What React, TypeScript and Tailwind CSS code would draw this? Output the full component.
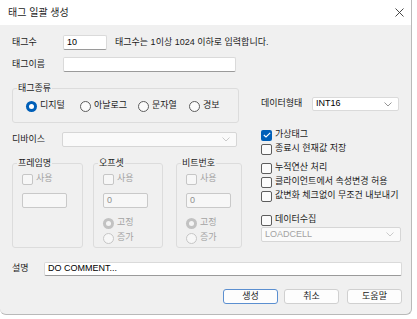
import React from 'react';

const font = "font-['Liberation_Sans','Noto_Sans_CJK_KR',sans-serif]";

function Chevron({ light }: { light?: boolean }) {
  return (
    <svg width="8" height="5" viewBox="0 0 8 5" className="shrink-0">
      <polyline points="0.5,0.5 4,4 7.5,0.5" fill="none" stroke={light ? '#c4c4c4' : '#8a8a8a'} strokeWidth="0.9" />
    </svg>
  );
}

function Check({ label, checked, disabled }: { label: string; checked?: boolean; disabled?: boolean }) {
  return (
    <div className="flex h-[14px] items-center gap-[3px]">
      {checked ? (
        <span className="flex h-[11px] w-[11px] items-center justify-center rounded-[2px] bg-[#005fb8]">
          <svg width="8" height="6" viewBox="0 0 8 6">
            <polyline points="0.8,3 3,5 7.2,0.8" fill="none" stroke="#fff" strokeWidth="1.1" />
          </svg>
        </span>
      ) : (
        <span
          className={
            disabled
              ? 'h-[11px] w-[11px] rounded-[2px] border border-[#c6c6c6] bg-[#f7f7f7]'
              : 'h-[11px] w-[11px] rounded-[2px] border border-[#5d5d5d] bg-[#fbfbfb]'
          }
        />
      )}
      <span className={disabled ? 'text-[#a3a3a3]' : 'text-[#1b1b1b]'}>{label}</span>
    </div>
  );
}

function Radio({ label, checked, disabled, w }: { label: string; checked?: boolean; disabled?: boolean; w?: string }) {
  let dot;
  if (checked && !disabled) {
    dot = (
      <span className="flex h-[11px] w-[11px] items-center justify-center rounded-full bg-[#005fb8]">
        <span className="h-[5px] w-[5px] rounded-full bg-white" />
      </span>
    );
  } else if (checked) {
    dot = (
      <span className="flex h-[11px] w-[11px] items-center justify-center rounded-full bg-[#c2c2c2]">
        <span className="h-[5px] w-[5px] rounded-full bg-[#f4f4f4]" />
      </span>
    );
  } else {
    dot = (
      <span
        className={
          disabled
            ? 'h-[11px] w-[11px] rounded-full border border-[#c6c6c6] bg-[#f7f7f7]'
            : 'h-[11px] w-[11px] rounded-full border border-[#5d5d5d] bg-[#fbfbfb]'
        }
      />
    );
  }
  return (
    <div className={`flex h-[12px] items-center gap-[3px] ${w ?? ''}`}>
      {dot}
      <span className={disabled ? 'text-[#a3a3a3]' : 'text-[#1b1b1b]'}>{label}</span>
    </div>
  );
}

function SubGroup({ title, w, value, radios }: { title: string; w: string; value?: string; radios?: boolean }) {
  return (
    <fieldset className={`box-border h-[91px] rounded-[3px] border border-[#dcdcdc] pl-[9px] ${w}`}>
      <legend className="-ml-[5px] px-[1px] leading-[12px] text-[#1b1b1b]">{title}</legend>
      <div className="pt-[3px]">
        <Check label="사용" disabled />
      </div>
      <div className="mt-[7px] flex h-[15px] w-[45px] items-center rounded-[2px] border border-[#c9c9c9] bg-[#f7f7f7] pl-[3px] text-[#8f8f8f]">
        {value}
      </div>
      {radios && (
        <div className="mt-[9px] flex flex-col gap-[3px]">
          <Radio label="고정" checked disabled />
          <Radio label="증가" disabled />
        </div>
      )}
    </fieldset>
  );
}

export default function App() {
  return (
    <div className={`h-[319px] w-[417px] bg-white text-[9px] ${font}`}>
      <div className="box-border flex h-[315px] w-[412px] flex-col overflow-hidden rounded-b-[6px] border-r border-b border-[#b9b9b9] bg-[#f0f0f0]">
        {/* 타이틀 바 */}
        <div className="flex h-[25px] shrink-0 items-center justify-between bg-white pl-[8px] pr-[7px]">
          <span className="text-[10px] text-[#1b1b1b]">태그 일괄 생성</span>
          <svg width="9" height="9" viewBox="0 0 9 9">
            <path d="M0.5 0.5 L8.5 8.5 M8.5 0.5 L0.5 8.5" stroke="#333" strokeWidth="0.9" />
          </svg>
        </div>

        <div className="flex flex-col pl-[12px] pr-[9px]">
          {/* 태그수 */}
          <div className="mt-[10px] flex h-[15px] items-center">
            <span className="w-[51px] text-[#1b1b1b]">태그수</span>
            <div className="flex h-[15px] w-[44px] items-center rounded-[2px] border border-[#dadada] border-b-[#9a9a9a] bg-white pl-[3px]">
              10
            </div>
            <span className="ml-[8px] text-[#1b1b1b]">태그수는 1이상 1024 이하로 입력합니다.</span>
          </div>

          {/* 태그이름 */}
          <div className="mt-[7px] flex h-[15px] items-center">
            <span className="w-[51px] text-[#1b1b1b]">태그이름</span>
            <div className="h-[15px] w-[173px] rounded-[2px] border border-[#dadada] border-b-[#9a9a9a] bg-white" />
          </div>

          <div className="flex">
            {/* 왼쪽 */}
            <div className="flex w-[230px] flex-col">
              <fieldset className="mt-[10px] box-border h-[41px] w-[227px] rounded-[3px] border border-[#dcdcdc] pl-[13px]">
                <legend className="-ml-[9px] px-[1px] leading-[12px] text-[#1b1b1b]">태그종류</legend>
                <div className="mt-[6px] flex">
                  <Radio label="디지털" checked w="w-[54px]" />
                  <Radio label="아날로그" w="w-[58px]" />
                  <Radio label="문자열" w="w-[51px]" />
                  <Radio label="경보" />
                </div>
              </fieldset>

              <div className="mt-[9px] flex h-[15px] items-center">
                <span className="w-[50px] text-[#1b1b1b]">디바이스</span>
                <div className="flex h-[15px] w-[175px] items-center justify-end rounded-[2px] border border-[#d6d6d6] bg-[#fafafa] pr-[6px]">
                  <Chevron light />
                </div>
              </div>

              <div className="mt-[10px] flex">
                <SubGroup title="프레임명" w="w-[71px]" />
                <div className="ml-[10px]">
                  <SubGroup title="오프셋" w="w-[70px]" value="0" radios />
                </div>
                <div className="ml-[13px]">
                  <SubGroup title="비트번호" w="w-[66px]" value="0" radios />
                </div>
              </div>
            </div>

            {/* 오른쪽 */}
            <div className="ml-[19px] flex flex-1 flex-col">
              <div className="mt-[25px] flex h-[14px] items-center">
                <span className="w-[51px] text-[#1b1b1b]">데이터형태</span>
                <div className="flex h-[14px] w-[87px] items-center justify-between rounded-[2px] border border-[#dadada] bg-white pl-[3px] pr-[6px]">
                  <span>INT16</span>
                  <Chevron />
                </div>
              </div>

              <div className="mt-[17px]">
                <Check label="가상태그" checked />
                <Check label="종료시 현재값 저장" />
              </div>
              <div className="mt-[5px]">
                <Check label="누적연산 처리" />
                <Check label="클라이언트에서 속성변경 허용" />
                <Check label="값변화 체크없이 무조건 내보내기" />
              </div>
              <div className="mt-[10px]">
                <Check label="데이터수집" />
              </div>
              <div className="flex h-[15px] w-[140px] items-center justify-between rounded-[2px] border border-[#d6d6d6] bg-[#fafafa] pl-[3px] pr-[6px] text-[#a3a3a3]">
                <span>LOADCELL</span>
                <Chevron light />
              </div>
            </div>
          </div>

          {/* 설명 */}
          <div className="mt-[14px] flex h-[14px] items-center">
            <span className="w-[32px] text-[#1b1b1b]">설명</span>
            <div className="flex h-[14px] flex-1 items-center rounded-[2px] border border-[#dadada] border-b-[#9a9a9a] bg-white pl-[3px]">
              DO COMMENT...
            </div>
          </div>

          {/* 버튼 */}
          <div className="mt-[13px] flex justify-end">
            <button className="h-[15px] w-[55px] rounded-[3px] border border-[#5b8fd0] bg-[#fdfdfd] text-[#1b1b1b]">생성</button>
            <button className="ml-[6px] h-[15px] w-[55px] rounded-[3px] border border-[#d0d0d0] bg-[#fdfdfd] text-[#1b1b1b]">취소</button>
            <button className="ml-[8px] h-[15px] w-[55px] rounded-[3px] border border-[#d0d0d0] bg-[#fdfdfd] text-[#1b1b1b]">도움말</button>
          </div>
        </div>
      </div>
    </div>
  );
}
